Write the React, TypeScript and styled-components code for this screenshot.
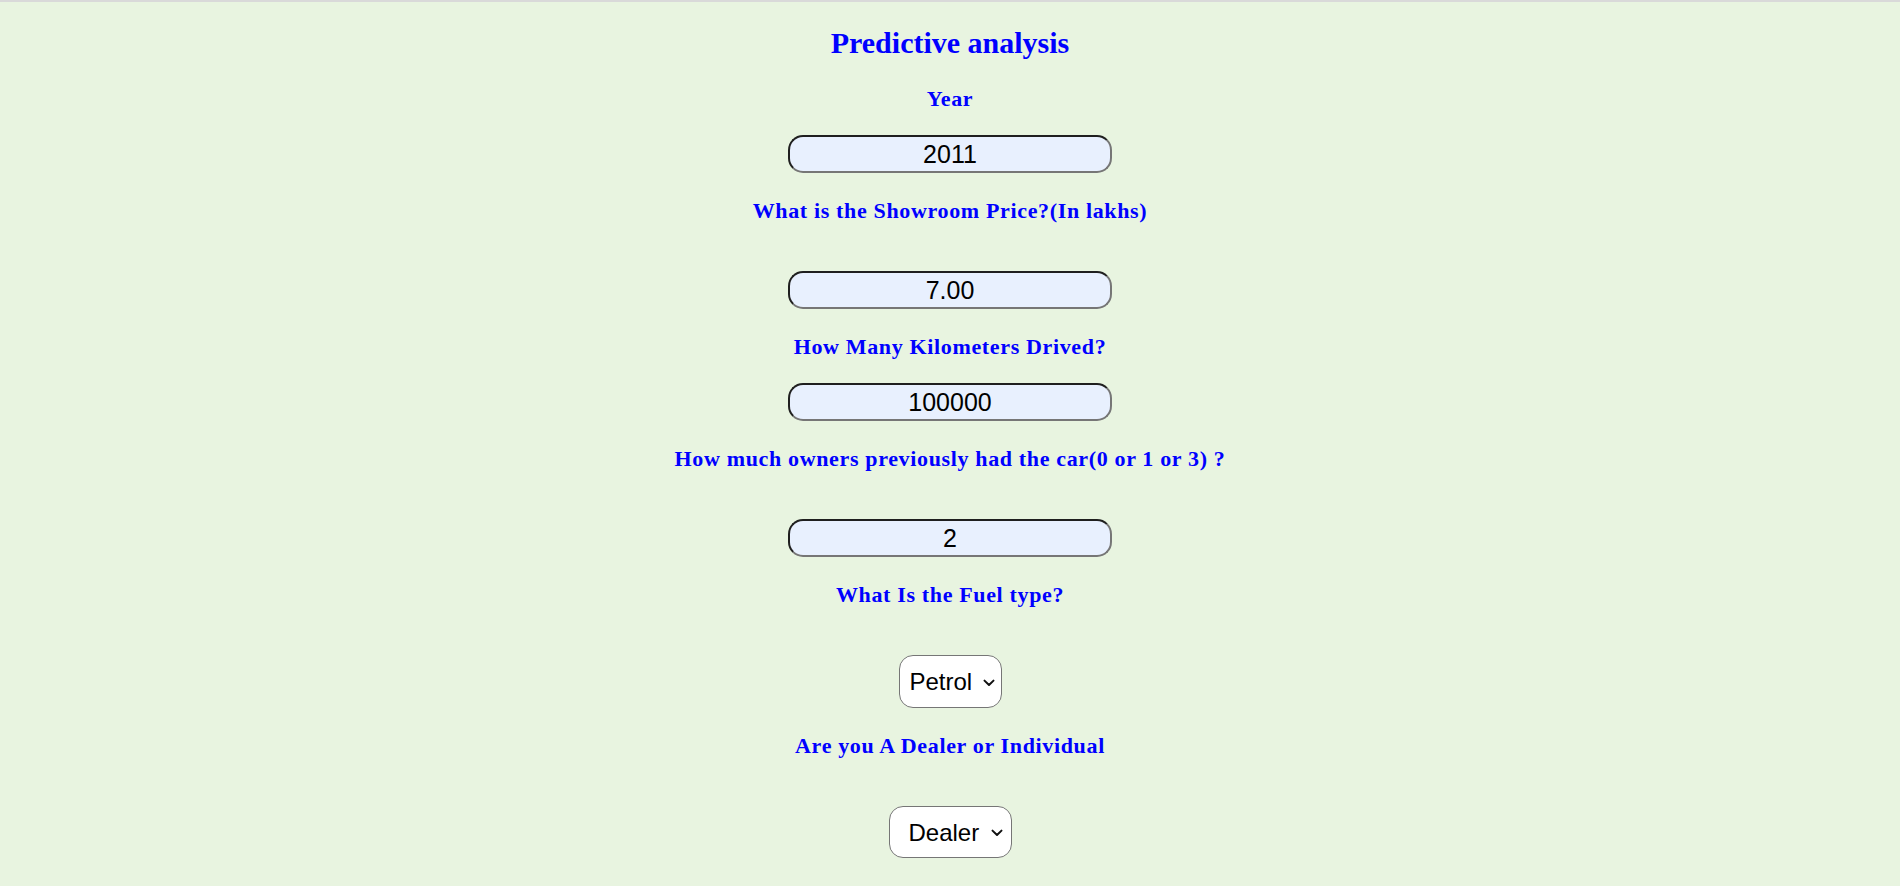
import React from "react";
import styled, { createGlobalStyle } from "styled-components";

const GlobalStyle = createGlobalStyle`
  html, body {
    margin: 0;
    padding: 0;
  }
  body {
    background: #e8f4e0;
    border-top: 2px solid #d9d9d9;
    min-height: 884px;
    font-family: "Liberation Serif", "Times New Roman", serif;
  }
`;

const Page = styled.main`
  display: flex;
  flex-direction: column;
  align-items: center;
  padding-top: 24px;
  padding-bottom: 40px;
`;

const Title = styled.h1`
  margin: 0 0 27px;
  font-family: "Liberation Serif", "Times New Roman", serif;
  font-size: 30px;
  line-height: 34px;
  font-weight: bold;
  color: #0000ff;
  text-align: center;
`;

const Label = styled.label<{ $first?: boolean; $wide?: boolean }>`
  display: block;
  margin: ${(p) => (p.$first ? "0" : "26px")} 0 ${(p) => (p.$wide ? "48px" : "24px")};
  font-family: "Liberation Serif", "Times New Roman", serif;
  font-size: 22px;
  line-height: 24px;
  font-weight: bold;
  letter-spacing: 0.65px;
  color: #0000ff;
  text-align: center;
`;

const TextInput = styled.input`
  box-sizing: border-box;
  width: 324px;
  height: 38px;
  margin: 0;
  padding: 0 12px;
  border-width: 2px;
  border-style: solid;
  border-color: #1f1f1f #767676 #767676 #1f1f1f;
  border-radius: 15px;
  background: #e8f0fe;
  color: #000;
  font-family: "Liberation Sans", Arial, sans-serif;
  font-size: 25px;
  text-align: center;
  outline: none;
`;

const SelectWrap = styled.div`
  position: relative;
  display: inline-block;
`;

const Select = styled.select<{ $w: number; $h: number; $pl: number }>`
  display: block;
  box-sizing: border-box;
  width: ${(p) => p.$w}px;
  height: ${(p) => p.$h}px;
  margin: 0;
  padding: 0 20px 0 ${(p) => p.$pl}px;
  appearance: none;
  -webkit-appearance: none;
  border: 1px solid #767676;
  border-radius: 14px;
  background-color: #fff;
  color: #000;
  font-family: "Liberation Sans", Arial, sans-serif;
  font-size: 24px;
  outline: none;
`;

const Chevron = styled.svg<{ $right: number }>`
  position: absolute;
  top: 50%;
  right: ${(p) => p.$right}px;
  width: 12px;
  height: 8px;
  margin-top: -3px;
  pointer-events: none;
`;

function Arrow({ right }: { right: number }) {
  return (
    <Chevron $right={right} viewBox="0 0 12 8" aria-hidden="true">
      <path d="M1.5 1.6 L6 6 L10.5 1.6" fill="none" stroke="#111" strokeWidth="2" strokeLinecap="round" strokeLinejoin="round" />
    </Chevron>
  );
}

export default function App() {
  return (
    <>
      <GlobalStyle />
      <Page>
        <Title>Predictive analysis</Title>

        <Label $first htmlFor="year">Year</Label>
        <TextInput id="year" defaultValue="2011" />

        <Label $wide htmlFor="price">What is the Showroom Price?(In lakhs)</Label>
        <TextInput id="price" defaultValue="7.00" />

        <Label htmlFor="kms">How Many Kilometers Drived?</Label>
        <TextInput id="kms" defaultValue="100000" />

        <Label $wide htmlFor="owners">How much owners previously had the car(0 or 1 or 3) ?</Label>
        <TextInput id="owners" defaultValue="2" />

        <Label $wide htmlFor="fuel">What Is the Fuel type?</Label>
        <SelectWrap>
          <Select id="fuel" $w={103} $h={53} $pl={10} defaultValue="Petrol">
            <option value="Petrol">Petrol</option>
            <option value="Diesel">Diesel</option>
            <option value="CNG">CNG</option>
          </Select>
          <Arrow right={7} />
        </SelectWrap>

        <Label $wide htmlFor="seller">Are you A Dealer or Individual</Label>
        <SelectWrap>
          <Select id="seller" $w={123} $h={52} $pl={19} defaultValue="Dealer">
            <option value="Dealer">Dealer</option>
            <option value="Individual">Individual</option>
          </Select>
          <Arrow right={9} />
        </SelectWrap>
      </Page>
    </>
  );
}
